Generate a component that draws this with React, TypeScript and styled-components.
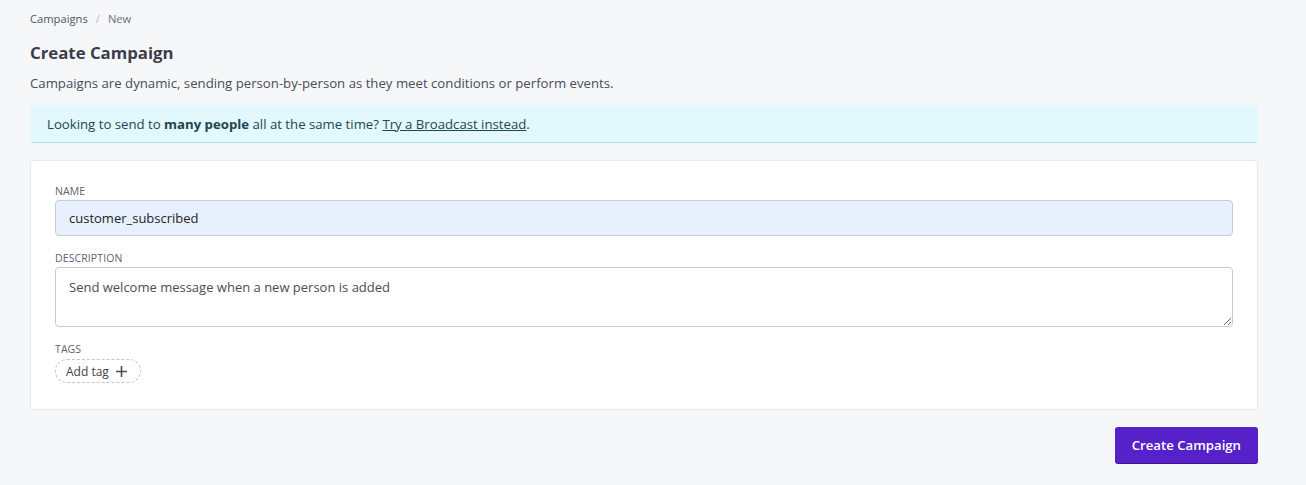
import React from "react";
import styled, { createGlobalStyle } from "styled-components";

const GlobalStyle = createGlobalStyle`
    body {
        margin: 0;
        background-color: #f6f7f9;
        font-family: "Open Sans", "Noto Sans", sans-serif;
        color: #3d3f4d;
    }
`;

const Page = styled.div`
    padding: 10px 48px 20px 30px;
`;

const Breadcrumb = styled.nav`
    display: flex;
    gap: 8px;
    font-size: 11.2px;
    color: #4f5463;
    line-height: 18px;
    span.sep {
        color: #b5b8c2;
    }
    span.current {
        color: #6b7080;
    }
`;

const Title = styled.h1`
    margin: 13px 0 0;
    font-size: 16.8px;
    font-weight: 700;
    color: #3b3d4c;
    line-height: 24px;
`;

const Lead = styled.p`
    margin: 8px 0 0;
    font-size: 13.2px;
    line-height: 20px;
    color: #494c59;
`;

const Banner = styled.div`
    margin-top: 12px;
    background: #e2f8fc;
    border-bottom: 1px solid #a8e3ec;
    border-radius: 3px;
    padding: 9px 17px 8px;
    font-size: 13.2px;
    line-height: 20px;
    color: #1f4550;
    b {
        font-weight: 700;
    }
    a {
        color: #1f4550;
        text-decoration: underline;
    }
`;

const Card = styled.section`
    margin-top: 17px;
    background: #ffffff;
    border: 1px solid #e6e8ec;
    border-radius: 4px;
    padding: 23px 24px 26px;
    display: flex;
    flex-direction: column;
    gap: 15px;
`;

const Field = styled.div`
    display: flex;
    flex-direction: column;
    gap: 1px;
`;

const Label = styled.label`
    font-size: 10.5px;
    line-height: 15px;
    text-transform: uppercase;
    color: #5d6272;
    letter-spacing: 0.1px;
`;

const TextInput = styled.input`
    box-sizing: border-box;
    height: 36px;
    width: 100%;
    border: 1px solid #c9cad8;
    border-radius: 4px;
    background: #e8f0fe;
    padding: 0 13px;
    font-family: inherit;
    font-size: 13px;
    color: #1d1f2b;
    outline: none;
`;

const TextArea = styled.textarea`
    box-sizing: border-box;
    height: 60px;
    width: 100%;
    border: 1px solid #c9cad8;
    border-radius: 4px;
    background: #ffffff;
    padding: 9px 13px;
    font-family: inherit;
    font-size: 13px;
    line-height: 20px;
    color: #494c59;
    resize: vertical;
    outline: none;
    display: block;
`;

const TagPill = styled.button`
    align-self: flex-start;
    display: inline-flex;
    align-items: center;
    gap: 6px;
    height: 24px;
    box-sizing: border-box;
    padding: 0 12px 0 10px;
    border: 1px dashed #c4c6cf;
    border-radius: 12px;
    background: #ffffff;
    font-family: inherit;
    font-size: 12px;
    color: #3d3f4d;
    cursor: pointer;
    margin-top: 1px;
`;

const Footer = styled.div`
    display: flex;
    justify-content: flex-end;
    margin-top: 17px;
`;

const PrimaryButton = styled.button`
    height: 36px;
    padding: 0 17px;
    border: none;
    border-radius: 3px;
    background: #5621c8;
    box-shadow: 0 1px 0 #3c1396;
    color: #ffffff;
    font-family: inherit;
    font-size: 13.2px;
    font-weight: 600;
    cursor: pointer;
`;

const PlusIcon = () => (
    <svg width="13" height="13" viewBox="0 0 13 13" fill="none" stroke="#4a4d5a" strokeWidth="1.6">
        <path d="M6.5 1v11M1 6.5h11" />
    </svg>
);

export default function App() {
    return (
        <>
            <GlobalStyle />
            <Page>
                <Breadcrumb>
                    <span>Campaigns</span>
                    <span className="sep">/</span>
                    <span className="current">New</span>
                </Breadcrumb>
                <Title>Create Campaign</Title>
                <Lead>Campaigns are dynamic, sending person-by-person as they meet conditions or perform events.</Lead>
                <Banner>
                    Looking to send to <b>many people</b> all at the same time? <a href="#">Try a Broadcast instead</a>.
                </Banner>
                <Card>
                    <Field>
                        <Label>Name</Label>
                        <TextInput defaultValue="customer_subscribed" />
                    </Field>
                    <Field>
                        <Label>Description</Label>
                        <TextArea defaultValue="Send welcome message when a new person is added" />
                    </Field>
                    <Field>
                        <Label>Tags</Label>
                        <TagPill>
                            Add tag <PlusIcon />
                        </TagPill>
                    </Field>
                </Card>
                <Footer>
                    <PrimaryButton>Create Campaign</PrimaryButton>
                </Footer>
            </Page>
        </>
    );
}
